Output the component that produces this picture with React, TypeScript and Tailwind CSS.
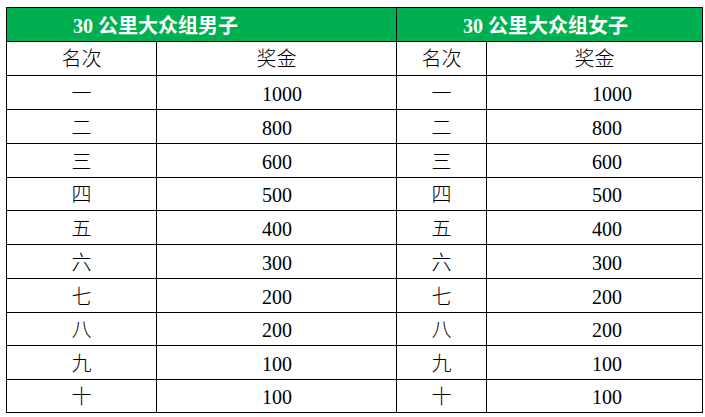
import React from "react";

const rows: [string, string][] = [
  ["一", "1000"],
  ["二", "800"],
  ["三", "600"],
  ["四", "500"],
  ["五", "400"],
  ["六", "300"],
  ["七", "200"],
  ["八", "200"],
  ["九", "100"],
  ["十", "100"],
];

// heights (incl. bottom border) of body rows
const heights = [34, 34, 34, 33, 34, 34, 34, 33, 34, 33];

const font = {
  fontFamily: '"Liberation Serif", "Noto Sans CJK SC", serif',
};

export default function App() {
  return (
    <div className="w-[705px] h-[417px] bg-white pl-[6px] pt-[7px]" style={font}>
      <div className="grid grid-cols-[150px_240px_90px_216px] border-l border-t border-black w-[697px] text-black">
        {/* green header */}
        <div className="col-span-2 h-[34px] bg-[#00b050] border-r border-b border-black flex items-center pl-[66px] pt-[2px] text-white font-bold text-[20px] leading-none">
          30 公里大众组男子
        </div>
        <div className="col-span-2 h-[34px] bg-[#00b050] border-r border-b border-black flex items-center pl-[66px] pt-[2px] text-white font-bold text-[20px] leading-none">
          30 公里大众组女子
        </div>
        {/* sub header */}
        {[0, 1].map((k) => (
          <React.Fragment key={k}>
            <div className="h-[34px] border-r border-b border-black flex items-center justify-center pt-[1px] text-[20px] leading-none font-light">
              名次
            </div>
            <div className="h-[34px] border-r border-b border-black flex items-center justify-center pt-[1px] text-[20px] leading-none font-light">
              奖金
            </div>
          </React.Fragment>
        ))}
        {rows.map(([r, v], i) => (
          <React.Fragment key={i}>
            {[0, 1].map((k) => (
              <React.Fragment key={k}>
                <div
                  className="border-r border-b border-black flex items-center justify-center pt-[2px] text-[20px] leading-none font-light"
                  style={{ height: heights[i] }}
                >
                  {r}
                </div>
                <div
                  className="border-r border-b border-black flex items-center pl-[105px] pt-[2px] text-[20px] leading-none"
                  style={{ height: heights[i] }}
                >
                  {v}
                </div>
              </React.Fragment>
            ))}
          </React.Fragment>
        ))}
      </div>
    </div>
  );
}
